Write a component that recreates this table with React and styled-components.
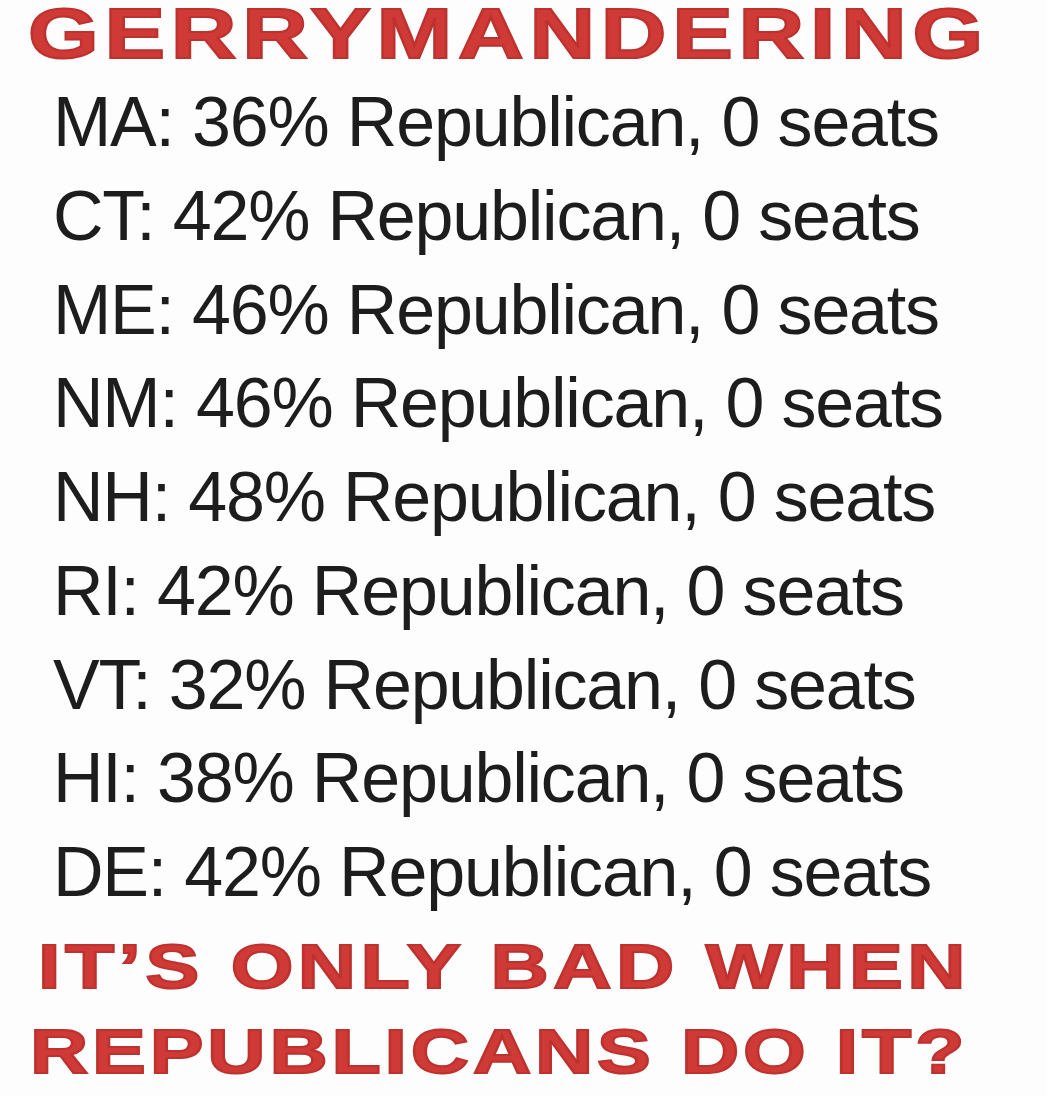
import styled, { createGlobalStyle } from "styled-components";

const rows = [
  { state: "MA", pct: 36 },
  { state: "CT", pct: 42 },
  { state: "ME", pct: 46 },
  { state: "NM", pct: 46 },
  { state: "NH", pct: 48 },
  { state: "RI", pct: 42 },
  { state: "VT", pct: 32 },
  { state: "HI", pct: 38 },
  { state: "DE", pct: 42 },
];

const GlobalStyle = createGlobalStyle`
  html, body {
    margin: 0;
    padding: 0;
    background: #fdfdfd;
  }
`;

const App = () => {
  return (
    <Page>
      <GlobalStyle />
      <Title>GERRYMANDERING</Title>
      <List>
        {rows.map((r) => (
          <Row key={r.state}>
            {r.state}: {r.pct}% Republican, 0 seats
          </Row>
        ))}
      </List>
      <Footer>
        <Shout $left={38} $spacing={3.5}>IT’S ONLY BAD WHEN</Shout>
        <Shout $left={30} $spacing={3}>REPUBLICANS DO IT?</Shout>
      </Footer>
    </Page>
  );
};

const Page = styled.div`
  width: 1047px;
  height: 1096px;
  overflow: hidden;
  background: #fdfdfd;
  display: flex;
  flex-direction: column;
  align-items: flex-start;
  font-family: "Liberation Sans", Arial, sans-serif;
`;

const Headline = styled.div`
  width: max-content;
  color: #cf3a36;
  font-weight: 700;
  white-space: nowrap;
  transform: scaleX(1.28);
  transform-origin: left center;
  -webkit-text-stroke: 2px #bd312e;
  text-shadow: 0 0 1px rgba(150, 30, 30, 0.5);
`;

const Title = styled(Headline)`
  font-size: 71px;
  line-height: 80px;
  margin-top: -6px;
  letter-spacing: 4.5px;
  margin-left: 28px;
`;

const List = styled.div`
  display: flex;
  flex-direction: column;
  margin-top: 2px;
  padding-left: 53px;
`;

const Row = styled.div`
  font-size: 70px;
  line-height: 93.75px;
  letter-spacing: -1.2px;
  color: #1d1d1d;
  white-space: nowrap;
`;

const Footer = styled.div`
  display: flex;
  flex-direction: column;
  align-items: flex-start;
  margin-top: 4px;
`;

const Shout = styled(Headline)`
  font-size: 63px;
  line-height: 85px;
  letter-spacing: ${(p) => p.$spacing}px;
  margin-left: ${(p) => p.$left}px;
`;

export default App;
